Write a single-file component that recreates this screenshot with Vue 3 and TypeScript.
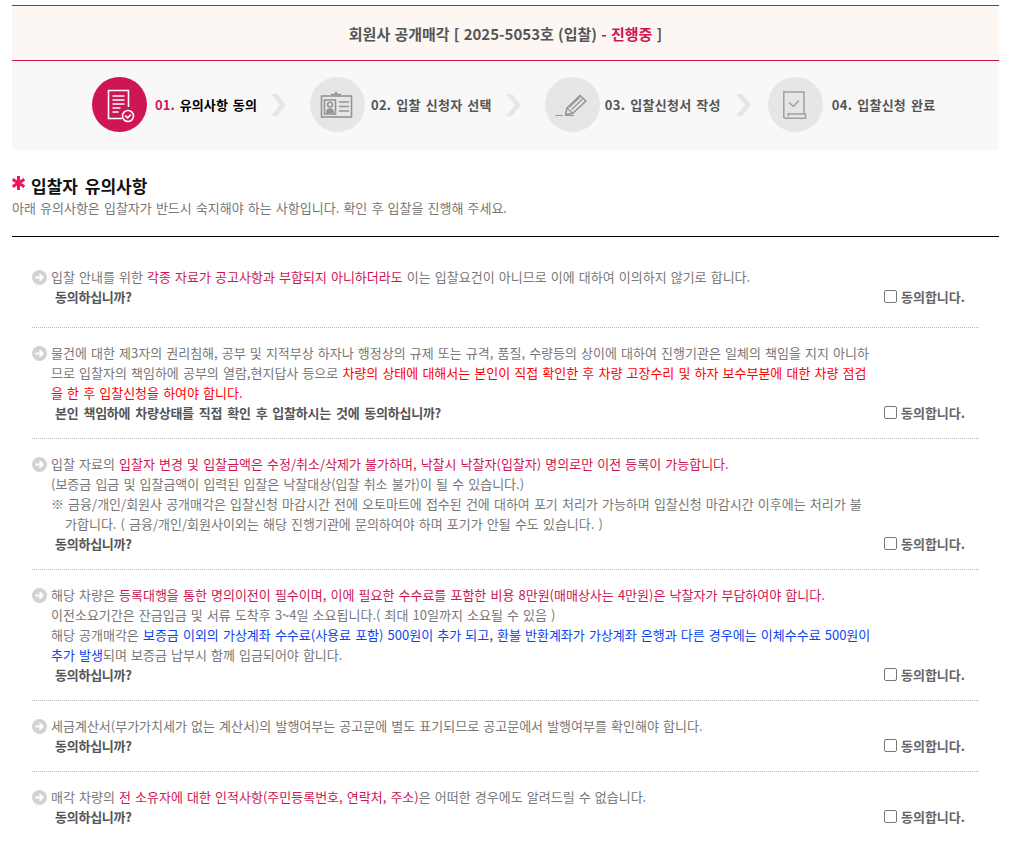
<script setup lang="ts">
interface Seg { t: string; c?: string }
interface Item { lines: Seg[][]; q: string; indentLast?: number }
const crimson = 'p'
const red = 'r'
const blue = 'b'
const steps = [
  { no: '01.', label: '유의사항 동의', active: true, icon: 'doc' },
  { no: '02.', label: '입찰 신청자 선택', active: false, icon: 'card' },
  { no: '03.', label: '입찰신청서 작성', active: false, icon: 'pen' },
  { no: '04.', label: '입찰신청 완료', active: false, icon: 'scroll' },
]
const items: Item[] = [
  { lines: [[{ t: '입찰 안내를 위한 ' }, { t: '각종 자료가 공고사항과 부합되지 아니하더라도', c: crimson }, { t: ' 이는 입찰요건이 아니므로 이에 대하여 이의하지 않기로 합니다.' }]], q: '동의하십니까?' },
  { lines: [
    [{ t: '물건에 대한 제3자의 권리침해, 공부 및 지적부상 하자나 행정상의 규제 또는 규격, 품질, 수량등의 상이에 대하여 진행기관은 일체의 책임을 지지 아니하' }],
    [{ t: '므로 입찰자의 책임하에 공부의 열람,현지답사 등으로 ' }, { t: '차량의 상태에 대해서는 본인이 직접 확인한 후 차량 고장수리 및 하자 보수부분에 대한 차량 점검', c: red }],
    [{ t: '을 한 후 입찰신청을 하여야 합니다.', c: red }],
  ], q: '본인 책임하에 차량상태를 직접 확인 후 입찰하시는 것에 동의하십니까?' },
  { lines: [
    [{ t: '입찰 자료의 ' }, { t: '입찰자 변경 및 입찰금액은 수정/취소/삭제가 불가하며, 낙찰시 낙찰자(입찰자) 명의로만 이전 등록이 가능합니다.', c: crimson }],
    [{ t: '(보증금 입금 및 입찰금액이 입력된 입찰은 낙찰대상(입찰 취소 불가)이 될 수 있습니다.)' }],
    [{ t: '※ 금융/개인/회원사 공개매각은 입찰신청 마감시간 전에 오토마트에 접수된 건에 대하여 포기 처리가 가능하며 입찰신청 마감시간 이후에는 처리가 불' }],
    [{ t: '가합니다. ( 금융/개인/회원사이외는 해당 진행기관에 문의하여야 하며 포기가 안될 수도 있습니다. )' }],
  ], q: '동의하십니까?', indentLast: 3 },
  { lines: [
    [{ t: '해당 차량은 ' }, { t: '등록대행을 통한 명의이전이 필수이며, 이에 필요한 수수료를 포함한 비용 8만원(매매상사는 4만원)은 낙찰자가 부담하여야 합니다.', c: crimson }],
    [{ t: '이전소요기간은 잔금입금 및 서류 도착후 3~4일 소요됩니다.( 최대 10일까지 소요될 수 있음 )' }],
    [{ t: '해당 공개매각은 ' }, { t: '보증금 이외의 가상계좌 수수료(사용료 포함) 500원이 추가 되고, 환불 반환계좌가 가상계좌 은행과 다른 경우에는 이체수수료 500원이', c: blue }],
    [{ t: '추가 발생', c: blue }, { t: '되며 보증금 납부시 함께 입금되어야 합니다.' }],
  ], q: '동의하십니까?' },
  { lines: [[{ t: '세금계산서(부가가치세가 없는 계산서)의 발행여부는 공고문에 별도 표기되므로 공고문에서 발행여부를 확인해야 합니다.' }]], q: '동의하십니까?' },
  { lines: [[{ t: '매각 차량의 ' }, { t: '전 소유자에 대한 인적사항(주민등록번호, 연락처, 주소)', c: crimson }, { t: '은 어떠한 경우에도 알려드릴 수 없습니다.' }]], q: '동의하십니까?' },
]
</script>

<template>
  <div class="page">
    <header class="head">
      회원사 공개매각 [ 2025-5053호 (입찰) <span class="pink">- 진행중</span> ]
    </header>
    <nav class="steps">
      <template v-for="(s, i) in steps" :key="s.no">
        <div class="step" :class="[{ on: s.active }, s.icon]">
          <span class="circle">
            <svg v-if="s.icon === 'doc'" width="36" height="36" viewBox="0 0 36 36" fill="none" stroke="#fff">
              <path d="M26.5 20V3.500H6.500V31.500H20" stroke-width="1.600" />
              <path d="M10.500 9h12M10.500 13h12M10.500 17h12M10.500 21h8M10.500 25h6" stroke-width="1.600" />
              <circle cx="26" cy="29" r="5.500" stroke-width="1.600" fill="#ce1653" />
              <path d="M23.200 28.600l2.400 2.200 3.200-3.200" stroke-width="1.600" />
            </svg>
            <svg v-else-if="s.icon === 'card'" width="34" height="28" viewBox="0 0 34 28" fill="none" stroke="#949494">
              <rect x="1.500" y="5" width="30" height="21" stroke-width="1.600" />
              <path d="M11 4V2.800h4V.8h2v2h4V4z" fill="#949494" stroke="none" />
              <rect x="4.500" y="9" width="11" height="14" stroke-width="1.600" />
              <circle cx="10" cy="13.600" r="2.400" stroke-width="1.600" />
              <path d="M6 22c0-3.600 1.600-4.800 4-4.800s4 1.200 4 4.800" fill="#949494" stroke="none" />
              <path d="M19 11h10M19 15.500h10M19 20h10" stroke-width="1.600" />
            </svg>
            <svg v-else-if="s.icon === 'pen'" width="34" height="24" viewBox="0 0 34 24" fill="none" stroke="#949494">
              <path d="M.5 22.500h7.500M10 22.500h9" stroke-width="1" />
              <path d="M10.500 21.500l1.500-6.500L25 2.500l6 5.500-13.500 12.500z" stroke-width="1.600" stroke-linejoin="round" />
              <path d="M14 14.500l11-10.500M16.500 16.500l11-10.500M12 15l6 5.500" stroke-width="1.200" />
            </svg>
            <svg v-else width="24" height="28" viewBox="0 0 24 28" fill="none" stroke="#a0a0a0">
              <path d="M21 22.500V1H.8v26" stroke-width="1.500" />
              <path d="M.8 25.500c0 1 .7 1.700 1.700 1.700H22.500v-4.200H5.200v2.500" stroke-width="1.500" />
              <path d="M6 11.500l4.500 4 5.500-6" stroke-width="1.500" />
            </svg>
          </span>
          <span class="label"><em>{{ s.no }}</em> {{ s.label }}</span>
        </div>
        <svg v-if="i < 3" class="chev" width="16" height="22" viewBox="0 0 16 22"><path d="M0 0h6l9 11-9 11H0l9-11z" fill="#e6e6e6" /></svg>
      </template>
    </nav>

    <h2 class="title">
      <svg class="star" width="13" height="14" viewBox="0 0 13 14"><path d="M6.500 0v14M.6 3.400l11.800 7.200M12.400 3.400L.6 10.600" stroke="#f0145a" stroke-width="3" fill="none" /></svg>
      입찰자 유의사항
    </h2>
    <p class="sub">아래 유의사항은 입찰자가 반드시 숙지해야 하는 사항입니다. 확인 후 입찰을 진행해 주세요.</p>

    <ul class="list">
      <li v-for="(it, n) in items" :key="n" class="item">
        <div class="body">
          <svg class="bullet" width="15" height="15" viewBox="0 0 16 16"><circle cx="8" cy="8" r="8" fill="#d2d2d2" /><path d="M3.500 8h7.500M8 4.500L11.500 8 8 11.500" fill="none" stroke="#fff" stroke-width="2" /></svg>
          <div v-for="(ln, j) in it.lines" :key="j" class="line" :class="{ hang: it.indentLast && j === it.lines.length - 1 }">
            <span v-for="(s, k) in ln" :key="k" :class="s.c">{{ s.t }}</span>
          </div>
        </div>
        <div class="ask">
          <strong>{{ it.q }}</strong>
          <label class="agree"><input type="checkbox" />동의합니다.</label>
        </div>
      </li>
    </ul>
  </div>
</template>

<style scoped>
.page {
  width: 987px;
  margin-left: 12px;
  padding-top: 5px;
  font-family: "Noto Sans CJK KR", "Noto Sans", sans-serif;
  font-size: 13px;
  color: #666;
}
.head {
  height: 54px;
  border-top: 1px solid #c8174f;
  border-bottom: 1px solid #c8174f;
  background: #fcf7f3;
  display: flex;
  align-items: center;
  justify-content: center;
  font-size: 15px;
  font-weight: 700;
  word-spacing: .8px;
  color: #555;
  white-space: pre;
}
.pink { color: #ce1653; }
.steps {
  height: 89px;
  background: #f8f8f8;
  display: flex;
  align-items: center;
  padding: 0 0 2px 80px;
  box-sizing: border-box;
}
.step { display: flex; align-items: center; gap: 8px; }
.card { gap: 6px; }
.pen { gap: 5px; }
.scroll { gap: 9px; }
.circle {
  width: 55px;
  height: 55px;
  border-radius: 50%;
  background: #e6e6e6;
  display: flex;
  align-items: center;
  justify-content: center;
}
.on .circle { background: #ce1653; }
.label {
  font-size: 13px;
  font-weight: 700;
  color: #555;
  white-space: nowrap;
  word-spacing: 1.7px;
  letter-spacing: .28px;
  margin-top: -1px;
}
.label em { font-style: normal; }
.on .label { color: #000; letter-spacing: .12px; }
.on .label em { color: #ce1653; }
.chev { margin: 0 23px 0 14px; flex: none; }
.pen + .chev { margin: 0 16px 0 15px; }
.title {
  margin: 24px 0 0;
  font-size: 17px;
  line-height: 24px;
  font-weight: 700;
  color: #111;
  display: flex;
  align-items: center;
  gap: 6px;
  word-spacing: 3px;
}
.star { margin-top: -6px; flex: none; }
.sub {
  margin: 1px 0 0;
  line-height: 18px;
  color: #777;
  word-spacing: 1.2px;
}
.list {
  list-style: none;
  margin: 19px 0 0;
  padding: 20px 20px 0;
  border-top: 1px solid #000;
}
.item {
  padding: 15px 0 16px;
  border-bottom: 1px dotted #bbb;
}
.item:first-child { padding: 10px 0 21px; }
.item:last-child { border-bottom: 0; }
.body { position: relative; padding-left: 19px; }
.bullet { position: absolute; left: 0; top: 3px; }
.line { line-height: 20px; white-space: nowrap; color: #777; word-spacing: 1.2px; }
.line.hang { padding-left: 14px; }
.p { color: #ce1653; }
.r { color: #f00; }
.b { color: #0b45f0; }
.ask {
  display: flex;
  justify-content: space-between;
  align-items: center;
  height: 20px;
  margin-top: -1px;
  padding-left: 23px;
  padding-right: 14px;
  color: #555;
}
.ask strong { font-weight: 700; letter-spacing: -.25px; word-spacing: 2.3px; }
.agree { display: flex; align-items: center; font-weight: 700; color: #666; }
.agree input {
  appearance: none;
  width: 13px;
  height: 13px;
  margin: 0 4px 0 0;
  border: 1px solid #767676;
  border-radius: 2px;
  background: #fff;
}
</style>
